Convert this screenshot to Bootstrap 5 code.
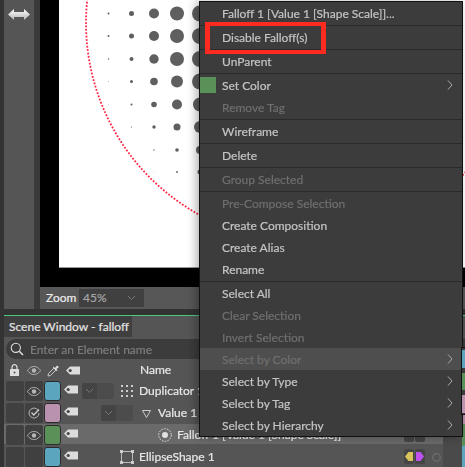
<!doctype html>
<html lang="en"><head><meta charset="utf-8"><title>Scene Window - falloff</title>
<link href="https://cdn.jsdelivr.net/npm/bootstrap@5.3.0/dist/css/bootstrap.min.css" rel="stylesheet">
<style>
html,body{height:467px;overflow:hidden}
body{background:#333;font-family:Lato,"Liberation Sans",sans-serif;font-size:12px;color:#d8d8d8;-webkit-text-stroke:.2px}
.shell{height:467px;width:465px;padding-left:4px;position:relative;overflow:hidden;filter:blur(.3px)}
.top-area{height:309px}
.rail{width:30px;background:#555;padding:5px 0 0 4px}
.rail-gap{width:6px;background:#3a3a3a}
.view-col{width:425px}
.stage{height:287px;background:#000;padding:0 0 19px 19px}
.sheet{height:268px;background:#fff;border-bottom:1px solid #999;position:relative;overflow:hidden}
.zoom-bar{height:22px;background:#575757;padding:2px 0 2px 6px}
.zoom-label{width:33px;font-size:12px;line-height:18px;color:#ececec}
.zoom-pick{width:65px;background:#404040;color:#a5a5a5;font-size:12px;padding:0 4px}
.scene{margin-top:6px;border-top:1px solid #4fc77c;background:#555;height:152px}
.tab-strip{height:21px}
.scene-tab{width:128px;height:21px;background:#3f3f3f;color:#e4e4e4;font-size:12px;padding:0 0 0 5px;line-height:21px;white-space:nowrap}
.search-wrap{height:20px;margin:2px 0 0 2px;background:#3c3c3c;border-radius:10px 0 0 10px;padding-left:4px}
.search-input.form-control{background:transparent;border:0;border-radius:0;padding:0 0 0 6px;height:20px;min-height:0;font:12px Lato,sans-serif;color:#999;box-shadow:none}
.search-input::placeholder{color:#7d7d7d;opacity:1}
.head-row{height:21px;padding-top:1px}
.lock-ic{margin-left:6px}
.drop-ic{margin-left:6px}
.name-head{margin-left:60px;color:#e8e8e8;font-size:12px}
.scene-row{height:22px;background:#555}
.scene-row.on{background:#6a6a6a;height:20px;margin-bottom:2px}
.cell-a,.cell-b{height:20px;background:#404040;border-radius:2px;margin-top:1px;flex:none}
.cell-a{width:18px;margin-left:2px}
.cell-b{width:18px;margin-left:1px}
.swatch{width:17px;height:20px;border:1px solid #2b2b2b;border-radius:3px;margin:1px 0 0 1px;flex:none}
.c-blue{background:#5ba5bf}.c-pink{background:#b892ae}.c-green{background:#5a9159}
.tag-ic{margin:5px 0 0 3px;flex:none}
.row-name{font-size:12px;line-height:21px;white-space:nowrap;color:#e8e8e8;width:0;overflow:visible}
.twirl{width:32px;height:16px;background:#4c4c4c;border-radius:2px;margin-top:3px;flex:none}
.twirl span{display:flex;width:15px;height:16px;background:#444;border-radius:2px;align-items:center;justify-content:center}
.name-zone{width:365px;height:22px;flex:none}
.key-zone{width:40px;height:22px;flex:none;padding:3px 0 0 1px}
.key{width:10px;height:15px;background:#454545;border-radius:2px;margin-right:1px;display:flex;align-items:center;justify-content:center;flex:none}
.state-ring{margin:4px 0 0 6px;flex:none}
.time-zone{width:19px;background:#4a4a4a;height:22px;flex:none}
.strip{width:3px;height:22px;flex:none}
.ctx{display:block;position:absolute;left:199px;top:1px;width:264px;height:436px;margin:0;padding:0;background:#3c3c3c;border:1px solid #111;border-radius:0;box-shadow:-3px 0 9px rgba(0,0,0,.3);overflow:hidden;font-size:12px;min-width:0}
.ctx .dropdown-item{height:22px;line-height:23px;padding:0 0 0 22px;color:#c4c4c4;position:relative;background:transparent;white-space:nowrap}
.ctx .dropdown-item.disabled{color:#6f6f6f}
.ctx .dropdown-item.hot{background:#4e4e4e}
.ctx .dropdown-divider{height:2px;margin:0;border:0;border-bottom:1px solid #2a2a2a;opacity:1}
.ctx-swatch{position:absolute;left:0;top:3px;width:16px;height:16px;background:#5a9159}
.ctx-more{position:absolute;right:9px;top:6px}
.flag{position:absolute;left:205px;top:22px;width:121px;height:32px;border:solid #ff2a20;border-width:4px 5px;pointer-events:none;z-index:1001}
.side-pop{position:absolute;left:461px;top:347px;width:6px;height:68px;background:#3a3a3a;border:1px solid #111;z-index:1001}
.side-pop i{display:block;position:absolute;left:0;width:6px}
.pop-a{top:2px;height:18px}.pop-b{top:25px;height:17px}.pop-c{top:47px;height:18px}
</style></head>
<body>
<svg width="0" height="0" class="position-absolute">
<defs>
<linearGradient id="arrowfill" x1="0" y1="0" x2="0" y2="1"><stop offset="0" stop-color="#fff"/><stop offset="1" stop-color="#b5b5b5"/></linearGradient>
<symbol id="tag" viewBox="0 0 14 9"><path d="M0 4.500 4 .5H14V8.500H4Z" fill="#dcdcdc"/><circle cx="4.200" cy="4.500" r="1.600" fill="#444"/></symbol>
<symbol id="eye" viewBox="0 0 14 9"><path d="M.5 4.500C3 1 5 .5 7 .5s4 .5 6.500 4C11 8 9 8.500 7 8.500S3 8 .5 4.500Z" fill="none" stroke="#b5b5b5"/><circle cx="7" cy="4.500" r="2.200" fill="#b5b5b5"/></symbol>
<symbol id="down" viewBox="0 0 9 6"><path d="M1 1 4.500 4.500 8 1" fill="none" stroke="#777" stroke-width="1"/></symbol>
<symbol id="more" viewBox="0 0 6 10"><path d="M1 .5 5 5 1 9.500" fill="none" stroke="#aaa" stroke-width="1"/></symbol>
<symbol id="keyL" viewBox="0 0 8 9"><path d="M0 4.500 3.500 0H8V9H3.500Z"/></symbol>
<symbol id="keyR" viewBox="0 0 8 9"><path d="M8 4.500 4.500 9H0V0H4.500Z"/></symbol>
</defs></svg>
<div class="shell">
 <div class="top-area d-flex">
  <div class="rail"><svg width="22" height="13" viewBox="0 0 22 13"><path d="M0 6.500 6 1V4H16V1L22 6.500 16 12V9H6V12Z" fill="url(#arrowfill)"/></svg></div>
  <div class="rail-gap"></div>
  <div class="view-col d-flex flex-column">
   <div class="stage"><div class="sheet">
    <svg width="406" height="268" viewBox="59 0 406 268" class="d-block">
     <circle cx="305" cy="23" r="219" fill="none" stroke="#ff2646" stroke-width="1.800" stroke-dasharray="1.800 1.600"/>
     <g fill="#5f5f5f">
      <circle cx="108.500" cy="13.500" r="1"/><circle cx="131.500" cy="13.500" r="2.500"/><circle cx="154" cy="13.500" r="5"/><circle cx="177" cy="13.500" r="7"/><circle cx="200" cy="13.500" r="8"/>
      <circle cx="108.500" cy="36" r="1"/><circle cx="131.500" cy="36" r="2.500"/><circle cx="154" cy="36" r="5"/><circle cx="177" cy="36" r="7"/><circle cx="200" cy="36" r="8"/>
      <circle cx="108.500" cy="59" r=".7"/><circle cx="131.500" cy="59" r="2"/><circle cx="154" cy="59" r="4.700"/><circle cx="177" cy="59" r="7"/><circle cx="200" cy="59" r="8"/>
      <circle cx="108.500" cy="81.500" r=".4"/><circle cx="131.500" cy="81.500" r="1.500"/><circle cx="154" cy="81.500" r="3.800"/><circle cx="177" cy="81.500" r="6"/><circle cx="200" cy="81.500" r="8"/>
      <circle cx="108.500" cy="104.500" r=".3"/><circle cx="131.500" cy="104.500" r="1"/><circle cx="154" cy="104.500" r="2.800"/><circle cx="177" cy="104.500" r="5"/><circle cx="200" cy="104.500" r="7"/>
      <circle cx="131.500" cy="127" r=".6"/><circle cx="154" cy="127" r="1.700"/><circle cx="177" cy="127" r="3.500"/><circle cx="200" cy="127" r="6"/>
      <circle cx="154" cy="150" r=".7"/><circle cx="177" cy="150" r="1.800"/><circle cx="200" cy="150" r="4"/>
      <circle cx="154" cy="172" r=".3"/><circle cx="177" cy="172" r=".9"/><circle cx="200" cy="172" r="2.500"/>
     </g>
    </svg>
   </div></div>
   <div class="zoom-bar d-flex">
    <div class="zoom-label">Zoom</div>
    <div class="zoom-pick d-flex align-items-center justify-content-between"><span>45%</span><svg width="9" height="6" class="me-1"><use href="#down"/></svg></div>
   </div>
  </div>
 </div>
 <div class="scene">
  <div class="tab-strip d-flex"><div class="scene-tab">Scene Window - falloff</div></div>
  <div class="search-wrap d-flex align-items-center">
   <svg width="14" height="14" viewBox="0 0 14 14" class="flex-shrink-0"><circle cx="5.800" cy="5.800" r="4.600" fill="none" stroke="#ddd" stroke-width="1.100"/><path d="M9.300 9.300 13 13" stroke="#ddd" stroke-width="1.600"/></svg>
   <input class="search-input form-control" placeholder="Enter an Element name" aria-label="Search">
  </div>
  <div class="head-row d-flex align-items-center">
   <svg width="9" height="12" viewBox="0 0 9 12" class="lock-ic"><path d="M2 5V3.200a2.500 2.500 0 0 1 5 0V5" fill="none" stroke="#ddd" stroke-width="1.200"/><rect y="5" width="9" height="7" rx=".6" fill="#ddd"/><circle cx="4.500" cy="8.500" r="1" fill="#555"/></svg>
   <svg width="14" height="9" class="ms-2"><use href="#eye"/></svg>
   <svg width="13" height="13" viewBox="0 0 13 13" class="drop-ic"><path d="M1 12 1.500 9.500 7 4 9 6 3.500 11.500Z" fill="none" stroke="#c8c8c8"/><path d="M6.500 2.500 8 4 9.500 2a1.300 1.300 0 0 1 2 1.500L9.500 5 10.500 6.500 9.300 7 6 3.700Z" fill="#dcdcdc"/></svg>
   <svg width="14" height="9" class="drop-ic"><use href="#tag"/></svg>
   <span class="name-head">Name</span>
  </div>
  <div class="scene-row d-flex">
   <div class="cell-a"></div><div class="cell-b d-flex align-items-center justify-content-center"><svg width="14" height="9"><use href="#eye"/></svg></div>
   <div class="swatch c-blue"></div><svg width="14" height="9" class="tag-ic"><use href="#tag"/></svg>
   <div class="name-zone d-flex">
    <div class="twirl" style="margin-left:4px"><span><svg width="9" height="6"><use href="#down"/></svg></span></div>
    <svg width="13" height="13" viewBox="0 0 13 13" class="mt-1 flex-shrink-0" style="margin-left:7px"><g fill="#ccc"><rect x="0" y="1" width="2" height="2"/><rect x="5" y="1" width="2" height="2"/><rect x="10" y="1" width="2" height="2"/><rect x="0" y="6" width="2" height="2"/><rect x="5" y="6" width="2" height="2"/><rect x="10" y="6" width="2" height="2"/><rect x="0" y="11" width="2" height="2"/><rect x="5" y="11" width="2" height="2"/><rect x="10" y="11" width="2" height="2"/></g></svg>
    <span class="row-name" style="margin-left:5px">Duplicator 1</span>
   </div>
   <div class="time-zone"></div><div class="strip c-blue"></div>
  </div>
  <div class="scene-row d-flex">
   <div class="cell-a"></div><div class="cell-b d-flex align-items-center justify-content-center"><svg width="12" height="12" viewBox="0 0 12 12"><path d="M10.300 3.500A5 5 0 1 0 11 6" fill="none" stroke="#b5b5b5"/><path d="M3.500 5.500 5.800 8 11 2.500" fill="none" stroke="#cfcfcf" stroke-width="1.300"/></svg></div>
   <div class="swatch c-pink"></div><svg width="14" height="9" class="tag-ic"><use href="#tag"/></svg>
   <div class="name-zone d-flex">
    <div class="twirl" style="margin-left:23px"><span><svg width="9" height="6"><use href="#down"/></svg></span></div>
    <svg width="9" height="8" viewBox="0 0 9 8" class="flex-shrink-0" style="margin:8px 0 0 9px"><path d="M.5.500H8.500L4.500 7.500Z" fill="none" stroke="#ccc"/></svg>
    <span class="row-name" style="margin-left:7px">Value 1</span>
   </div>
   <div class="time-zone"></div><div class="strip c-pink"></div>
  </div>
  <div class="scene-row on d-flex">
   <div class="cell-a"></div><div class="cell-b d-flex align-items-center justify-content-center"><svg width="14" height="9"><use href="#eye"/></svg></div>
   <div class="swatch c-green"></div><svg width="14" height="9" class="tag-ic"><use href="#tag"/></svg>
   <div class="name-zone d-flex">
    <svg width="14" height="14" viewBox="0 0 14 14" class="flex-shrink-0" style="margin:4px 0 0 80px"><circle cx="7" cy="7" r="6.300" fill="none" stroke="#ddd" stroke-dasharray="1.600 1.200"/><circle cx="7" cy="7" r="3" fill="#e0e0e0"/></svg>
    <span class="row-name" style="margin-left:5px">Falloff 1 [Value 1 [Shape Scale]]</span>
    <div class="key-zone d-flex ms-auto"><div class="key"></div><div class="key"></div></div>
   </div>
   <div class="time-zone"></div><div class="strip c-green"></div>
  </div>
  <div class="scene-row d-flex">
   <div class="cell-a"></div><div class="cell-b"></div>
   <div class="swatch c-blue"></div><svg width="14" height="9" class="tag-ic"><use href="#tag"/></svg>
   <div class="name-zone d-flex">
    <svg width="14" height="14" viewBox="0 0 14 14" class="flex-shrink-0" style="margin:4px 0 0 42px"><rect x="1.500" y="1.500" width="11" height="11" fill="none" stroke="#bbb" stroke-width="1"/><g fill="#ccc"><rect width="3" height="3"/><rect x="11" width="3" height="3"/><rect y="11" width="3" height="3"/><rect x="11" y="11" width="3" height="3"/></g></svg>
    <span class="row-name" style="margin-left:5px">EllipseShape 1</span>
    <div class="key-zone d-flex ms-auto">
     <div class="key"><svg width="8" height="9" fill="#d9c35c"><use href="#keyL"/></svg></div>
     <div class="key"><svg width="8" height="9" fill="#c050f0"><use href="#keyR"/></svg></div>
     <svg width="9" height="9" viewBox="0 0 9 9" class="state-ring"><circle cx="4.500" cy="4.500" r="3.800" fill="none" stroke="#6e6e6e" stroke-width="1.200"/></svg>
    </div>
   </div>
   <div class="time-zone"></div><div class="strip c-blue"></div>
  </div>
 </div>

 <ul class="dropdown-menu ctx">
  <li class="dropdown-item">Falloff 1 [Value 1 [Shape Scale]]...</li>
  <li class="dropdown-divider"></li>
  <li class="dropdown-item">Disable Falloff(s)</li>
  <li class="dropdown-divider"></li>
  <li class="dropdown-item">UnParent</li>
  <li class="dropdown-divider"></li>
  <li class="dropdown-item"><span class="ctx-swatch"></span>Set Color<svg class="ctx-more" width="6" height="10"><use href="#more"/></svg></li>
  <li class="dropdown-item disabled">Remove Tag</li>
  <li class="dropdown-divider"></li>
  <li class="dropdown-item">Wireframe</li>
  <li class="dropdown-divider"></li>
  <li class="dropdown-item">Delete</li>
  <li class="dropdown-divider"></li>
  <li class="dropdown-item disabled">Group Selected</li>
  <li class="dropdown-divider"></li>
  <li class="dropdown-item disabled">Pre-Compose Selection</li>
  <li class="dropdown-item">Create Composition</li>
  <li class="dropdown-item">Create Alias</li>
  <li class="dropdown-item">Rename</li>
  <li class="dropdown-divider"></li>
  <li class="dropdown-item">Select All</li>
  <li class="dropdown-item disabled">Clear Selection</li>
  <li class="dropdown-item disabled">Invert Selection</li>
  <li class="dropdown-item disabled hot">Select by Color<svg class="ctx-more" width="6" height="10"><use href="#more"/></svg></li>
  <li class="dropdown-item">Select by Type<svg class="ctx-more" width="6" height="10"><use href="#more"/></svg></li>
  <li class="dropdown-item">Select by Tag<svg class="ctx-more" width="6" height="10"><use href="#more"/></svg></li>
  <li class="dropdown-item">Select by Hierarchy<svg class="ctx-more" width="6" height="10"><use href="#more"/></svg></li>
 </ul>
 <div class="flag"></div>
 <div class="side-pop"><i class="c-blue pop-a"></i><i class="c-green pop-b"></i><i class="c-pink pop-c"></i></div>
</div>
</body></html>
